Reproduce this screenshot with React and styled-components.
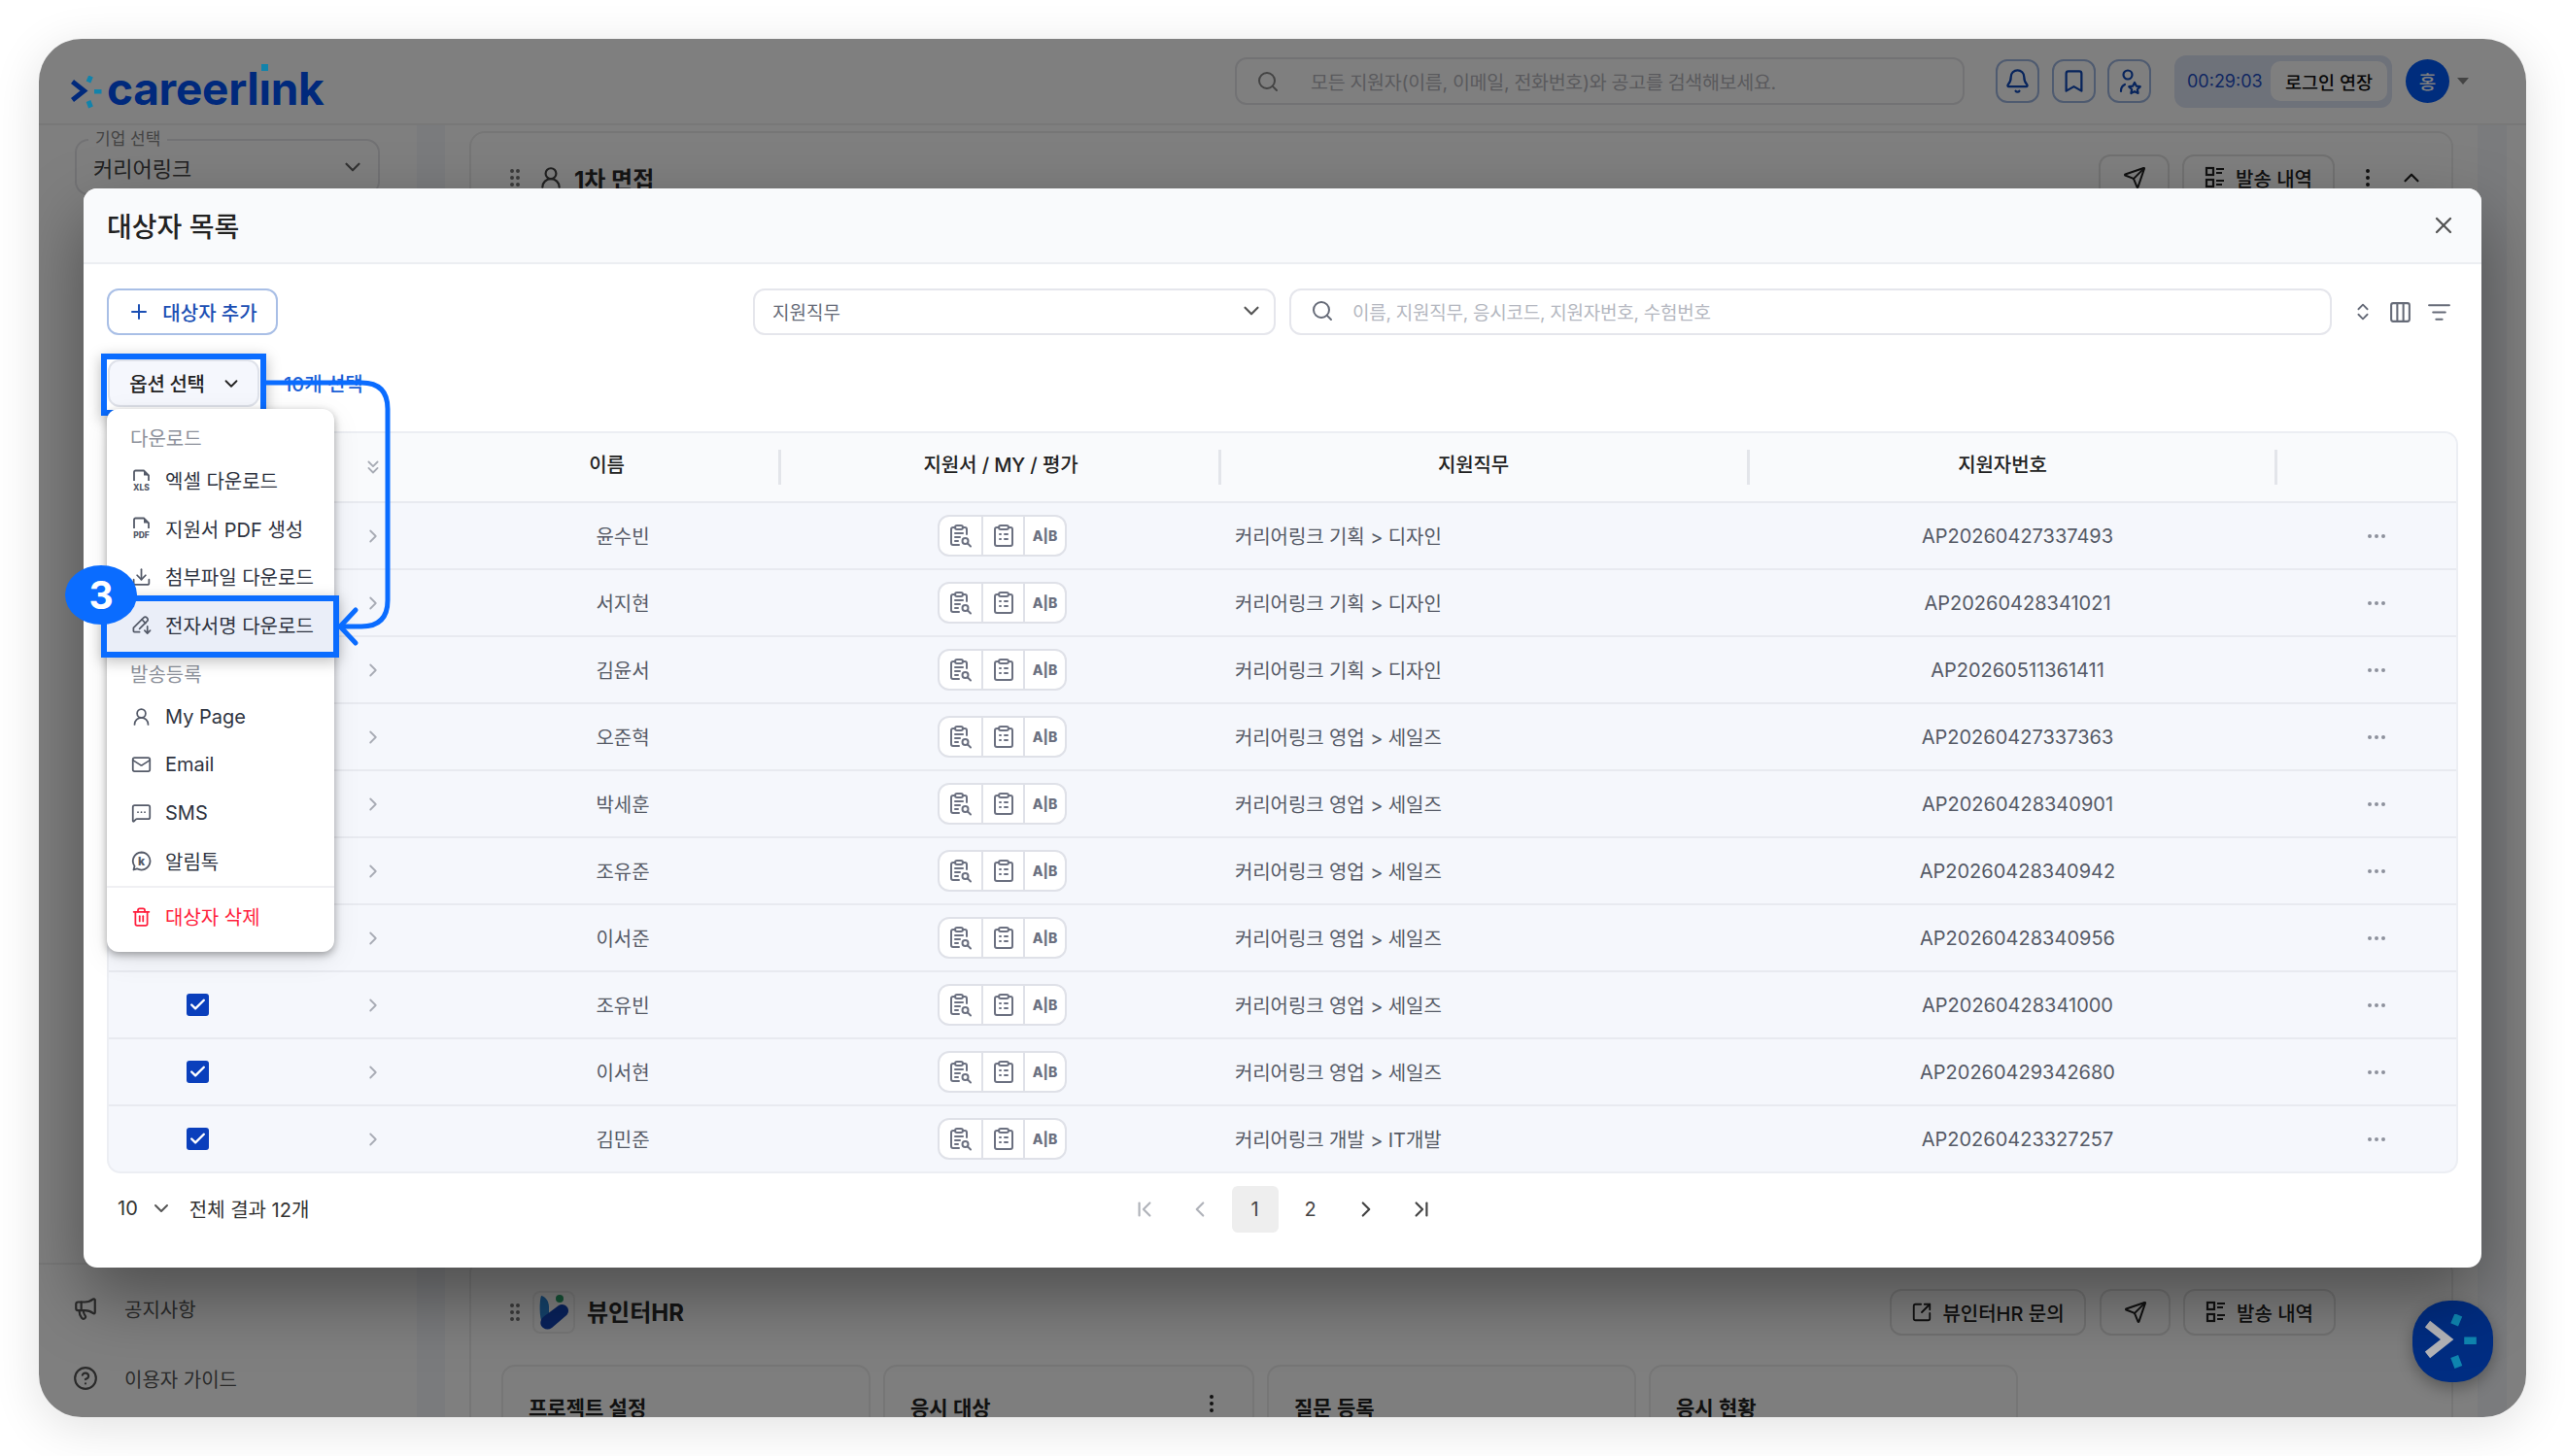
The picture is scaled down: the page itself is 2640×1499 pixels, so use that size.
import React from 'react';
import styled, { createGlobalStyle } from 'styled-components';
import {
  Search, Bell, Bookmark, ChevronDown, ChevronUp, ChevronRight, ChevronLeft, ChevronsDown, ChevronFirst, ChevronLast,
  X, Plus, ChevronsUpDown, Columns3, ListFilter, GripVertical, UserRound, Mail, MessageSquareMore, Trash2, Download,
  Ellipsis, EllipsisVertical, Send, SquareArrowOutUpRight, Megaphone, CircleHelp, Check,
} from 'lucide-react';

const FONT = `Inter, "Noto Sans CJK KR", sans-serif`;
const BLUE = '#0a6cff';

const Global = createGlobalStyle`
  html, body { margin: 0; padding: 0; background: #fff; }
  * { box-sizing: border-box; }
  body { font-family: ${FONT}; }
`;

const Stage = styled.div`
  width: 2640px; height: 1499px; padding: 40px; background: #fff; overflow: hidden;
`;
const Win = styled.div`
  position: relative; width: 2560px; height: 1419px; border-radius: 44px; overflow: hidden; background: #fff;
  box-shadow: 0 10px 50px rgba(0,0,0,.12);
  display: flex; flex-direction: column;
`;
const TopBar = styled.header`
  height: 89px; flex: none; display: flex; align-items: center; padding: 0 59px 0 33px; border-bottom: 2px solid #f1f1f1;
`;
const LogoWrap = styled.div`display: flex; align-items: center; gap: 3px; position: relative; z-index: 1; margin-top: 22px;`;
const LogoText = styled.span`
  font-size: 46px; font-weight: 700; letter-spacing: -.3px; color: #00297c; line-height: 1; margin-top: -8px;
`;
const Dotless = styled.span`
  position: relative;
  &::before { content: ''; position: absolute; left: 3px; top: 3px; width: 7px; height: 7px; background: #1283ab; }
`;
const TopSearch = styled.div`
  margin-left: auto; width: 751px; height: 49px; border: 2px solid #e4e4e8; border-radius: 12px; display: flex; align-items: center;
  padding-left: 20px; gap: 32px; font-size: 19.5px; letter-spacing: -.3px; color: #b4b4ba;
`;
const IconBox = styled.div`
  width: 45px; height: 45px; border: 2px solid #9fb6e0; border-radius: 12px; display: flex; align-items: center; justify-content: center;
  color: #0f48b8; margin-left: ${p => p.$ml}px;
`;
const Timer = styled.div`
  margin-left: 24px; width: 224px; height: 54px; border-radius: 12px; background: #dde4f4; display: flex; align-items: center; justify-content: space-between;
  padding: 0 5px 0 13px; color: #1f4fc4; font-size: 18px; font-weight: 400;
`;
const TimerBtn = styled.div`
  width: 120px; height: 41px; border-radius: 10px; background: #fff; color: #111; font-size: 18.5px; font-weight: 500; display: flex; align-items: center; justify-content: center;
`;
const Avatar = styled.div`
  margin-left: 14px; width: 45px; height: 45px; border-radius: 50%; background: #005afa; color: #fff; font-size: 19px; font-weight: 500;
  display: flex; align-items: center; justify-content: center;
`;
const Caret = styled.div`
  margin-left: 8px; width: 0; height: 0; border-left: 6px solid transparent; border-right: 6px solid transparent; border-top: 7px solid #888;
`;
const Body = styled.div`display: flex; flex: 1; min-height: 0;`;
const Side = styled.aside`
  width: 389px; flex: none; padding: 14px 38px 0 37px; display: flex; flex-direction: column; position: relative;
`;
const CompanySelect = styled.div`
  position: relative; height: 58px; border: 2px solid #e4e4e8; border-radius: 14px; display: flex; align-items: center; justify-content: space-between;
  padding: 0 13px 0 17px; font-size: 22px; color: #444;
`;
const Legend = styled.span`
  position: absolute; left: 12px; top: -13px; background: #fff; padding: 0 7px; font-size: 17px; color: #888; line-height: 22px;
`;
const SideFoot = styled.div`
  margin-top: auto; margin-left: -37px; margin-right: -38px; padding: 0 0 4px 35px; border-top: 2px solid #f1f1f1; display: flex; flex-direction: column;
`;
const SideLink = styled.div`
  height: 72px; display: flex; align-items: center; gap: 27px; font-size: 20px; color: #555; &:first-child { margin-top: 9px; }
`;
const Gutter = styled.div`width: ${p => p.$w}px; flex: none; background: #f4f6fb; margin-right: ${p => p.$mr || 0}px;`;
const Main = styled.main`
  flex: 1; min-width: 0; padding: 6px 25px 0; display: flex; flex-direction: column; gap: 10px; overflow: hidden;
`;
const Card = styled.section`
  flex: none; height: ${p => p.$h}px; border: 2px solid #ececec; border-radius: 16px; padding: ${p => p.$pt}px 0 0 31px;
`;
const CardHead = styled.div`
  display: flex; align-items: center; height: 48px; padding-right: ${p => p.$pr}px; color: #222;
`;
const CardTitle = styled.h3`
  margin: 0; font-size: 24px; font-weight: 700; color: #2a2a2a; margin-left: ${p => p.$ml}px; margin-right: auto; margin-top: ${p => p.$mt || 0}px;
`;
const LogoTile = styled.div`
  width: 44px; height: 44px; border: 2px solid #eee; border-radius: 8px; margin-left: 6px; display: flex; align-items: center; justify-content: center;
`;
const GhostBtn = styled.div`
  height: 48px; width: ${p => p.$w}px; margin-left: ${p => p.$ml}px; border: 2px solid #e2e2e2; border-radius: 12px; display: flex; align-items: center; justify-content: center;
  gap: 10px; font-size: 20px; font-weight: 500; color: #222; white-space: nowrap;
`;
const SubCards = styled.div`display: flex; gap: 13px; margin-top: 30px;`;
const SubCard = styled.div`
  width: ${p => p.$w}px; height: 120px; border: 2px solid #ececec; border-radius: 14px; padding: 26px 30px 0 26px; font-size: 21px; font-weight: 600; color: #222;
  display: flex; justify-content: space-between; background: #fcfdfc;
`;
const Overlay = styled.div`position: absolute; inset: 0; background: rgba(0,0,0,.5);`;
const Fab = styled.div`
  position: absolute; left: 2443px; top: 1299px; width: 83px; height: 84px; border-radius: 38px; background: #002d82; display: flex; align-items: center; justify-content: center;
  box-shadow: 0 6px 16px rgba(0,0,0,.3);
`;

const Modal = styled.div`
  position: absolute; left: 46px; top: 154px; width: 2468px; height: 1111px; background: #fff; border-radius: 14px; display: flex; flex-direction: column;
  box-shadow: 0 30px 70px rgba(0,0,0,.38);
`;
const ModalHead = styled.div`
  height: 78px; flex: none; background: #f9fafc; border-bottom: 2px solid #eceef2; border-radius: 14px 14px 0 0; display: flex; align-items: center; justify-content: space-between; padding: 0 25px 0 24px;
`;
const ModalTitle = styled.h2`margin: 0; font-size: 28px; font-weight: 500; color: #222;`;
const CloseBtn = styled.div`color: #555; display: flex;`;
const ModalBody = styled.div`flex: 1; padding: 25px 24px 0; display: flex; flex-direction: column;`;
const Toolbar = styled.div`display: flex; height: 48px; flex: none;`;
const AddBtn = styled.div`
  width: 176px; height: 48px; border: 2px solid #a9bfe6; border-radius: 12px; color: #1b4fb4; font-size: 20px; font-weight: 500; display: flex; align-items: center; justify-content: center; gap: 12px;
`;
const JobSelect = styled.div`
  margin-left: auto; width: 538px; border: 2px solid #e5e6ec; border-radius: 12px; display: flex; align-items: center; justify-content: space-between; padding: 0 10px 2px 18px; font-size: 19px; color: #666b78;
`;
const SearchBox = styled.div`
  margin-left: 14px; width: 1073px; border: 2px solid #e5e6ec; border-radius: 12px; display: flex; align-items: center; gap: 19px; padding: 0 0 2px 20px; color: #b4b7c0; font-size: 19px; letter-spacing: -.25px;
`;
const ToolIcons = styled.div`
  width: 130px; display: flex; align-items: center; justify-content: flex-end; gap: 15px; padding-right: 7px; color: #666b78;
`;
const OptRow = styled.div`display: flex; align-items: center; height: 49px; margin-top: 25px; flex: none;`;
const OptWrap = styled.div`
  position: relative; margin-left: 1px;
  &::after { content: ''; position: absolute; left: -7px; right: -7px; top: -6px; bottom: -9px; border: 6px solid ${BLUE}; box-shadow: 0 4px 14px rgba(0,0,0,.28); pointer-events: none; }
`;
const OptBtn = styled.div`
  width: 156px; height: 49px; border: 2px solid #dfe2ea; border-radius: 12px; background: #f5f7fd; display: flex; align-items: center; justify-content: center; gap: 16px; font-size: 20px; font-weight: 500; color: #222; letter-spacing: -.3px; padding-left: 4px;
`;
const Selected = styled.span`margin-left: 25px; font-size: 20px; font-weight: 500; color: #1b5fd6;`;
const Table = styled.div`
  margin-top: 25px; height: 764px; flex: none; border: 2px solid #eceef3; border-radius: 14px; overflow: hidden; background: #f5f7fc;
`;
const COLS = '182px 154px 356px 453px 544px 543px 1fr';
const HeadRow = styled.div`
  display: grid; grid-template-columns: ${COLS}; height: 72px; align-items: center; background: #f9fafc; border-bottom: 2px solid #e8eaf0;
`;
const HeadCell = styled.div`
  height: 36px; display: flex; align-items: center; justify-content: center; font-size: 20px; font-weight: 500; color: #222; letter-spacing: -.1px;
  padding: 0 ${p => p.$pr || 0}px 8px ${p => p.$pl || 0}px;
  border-right: ${p => (p.$sep ? '3px solid #e3e5ea' : 'none')};
`;
const Row = styled.div`
  display: grid; grid-template-columns: ${COLS}; height: 69px; align-items: center; border-bottom: 2px solid #e8eaf0; font-size: 20px; color: #555a66;
`;
const CheckCell = styled.div`display: flex; justify-content: center;`;
const Box = styled.div`
  width: 23px; height: 23px; border-radius: 3px; background: #0a3fbc; color: #fff; display: flex; align-items: center; justify-content: center;
`;
const ChevCell = styled.div`display: flex; padding-left: 79px; color: #a8acb5;`;
const CenterCell = styled.div`display: flex; justify-content: center; padding-left: ${p => p.$pl || 0}px;`;
const JobCell = styled.div`padding-left: 14px; letter-spacing: -.1px;`;
const Seg = styled.div`
  display: flex; height: 43px; border: 2px solid #dfe1e8; border-radius: 12px; background: #fff; color: #6b7080;
`;
const SegItem = styled.div`
  width: 43px; display: flex; align-items: center; justify-content: center; font-size: 14px; font-weight: 800;
  & + & { border-left: 2px solid #dfe1e8; }
`;
const Foot = styled.div`
  display: grid; grid-template-columns: 1fr auto 1fr; align-items: center; height: 48px; margin-top: 13px; flex: none;
`;
const FootLeft = styled.div`display: flex; align-items: center; padding: 0 0 2px 11px; font-size: 20px; color: #333; gap: 12px;`;
const FootCount = styled.span`margin-left: 5px;`;
const Pager = styled.div`display: flex; gap: 9px;`;
const PageBtn = styled.div`
  width: 48px; height: 48px; border-radius: 6px; display: flex; align-items: center; justify-content: center; font-size: 20px;
  background: ${p => (p.$on ? '#eeeeee' : 'transparent')}; color: ${p => (p.$dim ? '#b0b3ba' : '#444')};
`;

const Menu = styled.div`
  position: absolute; left: 24px; top: 227px; width: 234px; height: 559px; background: #fff; border-radius: 12px; padding-top: 9px;
  box-shadow: 0 3px 8px rgba(0,0,0,.35), 0 8px 30px rgba(0,0,0,.08); display: flex; flex-direction: column;
`;
const MenuLabel = styled.div`
  height: 40px; display: flex; align-items: center; padding-left: 24px; font-size: 20px; color: #8d919b; margin-top: ${p => p.$mt || 0}px; position: relative;
`;
const MenuItem = styled.div`
  height: 49.5px; display: flex; align-items: center; gap: 14px; padding-left: 25px; font-size: 20px; color: ${p => (p.$danger ? '#ff1f3d' : '#2e3340')}; position: relative; z-index: ${p => (p.$on ? 1 : 'auto')};
  &::before {
    content: ${p => (p.$on ? "''" : 'none')}; position: absolute; left: -6px; right: -5px; top: -6px; bottom: -9px; border: 6px solid ${BLUE}; background: #eaeef8; z-index: -1;
    box-shadow: 0 4px 14px rgba(0,0,0,.25);
  }
`;
const MenuIcon = styled.span`width: 21px; height: 24px; display: flex; align-items: center; justify-content: center; color: ${p => (p.$danger ? '#ff1f3d' : '#545a68')}; flex: none;`;
const MenuDivider = styled.div`height: 2px; background: #f0f0f3; margin: 1px 0 5px;`;
const Badge = styled.div`
  position: absolute; left: -19px; top: 388px; width: 74px; height: 61px; border-radius: 50%; background: ${BLUE}; color: #fff; font-size: 39px; font-weight: 700;
  display: flex; align-items: center; justify-content: center; z-index: 3;
`;
const Connector = styled.svg`position: absolute; left: 188px; top: 186px; z-index: 2; overflow: visible; pointer-events: none;`;

const Mark = ({ size = 34, chev = '#00297c', dash = '#1283ab' }) => (
  <svg width={size} height={size} viewBox="0 0 34 34" fill="none">
    <path d="M1.500 6 L13.500 15.500 L1.500 25" stroke={chev} strokeWidth="5" strokeLinejoin="miter" />
    <path d="M20.500 0.500 L18 6.500 M18 26 L20.500 32.500" stroke={dash} strokeWidth="5" />
    <rect x="24" y="14" width="7.500" height="4.500" fill={dash} />
  </svg>
);
const ClipSearch = () => (
  <svg width="24" height="26" viewBox="0 0 24 26" fill="none" stroke="currentColor" strokeWidth="2" strokeLinecap="round" strokeLinejoin="round">
    <path d="M6 4H4.500A2 2 0 0 0 2 6v14a2 2 0 0 0 2 2h6M14 4h2a2 2 0 0 1 2 2v5" />
    <rect x="6" y="2" width="8" height="4" rx="2" />
    <path d="M6 10h8M6 14h5M6 18h3" />
    <circle cx="16.500" cy="18" r="3" /><path d="M19 20.500l3 3" />
  </svg>
);
const ClipList = () => (
  <svg width="22" height="26" viewBox="0 0 22 26" fill="none" stroke="currentColor" strokeWidth="2" strokeLinecap="round" strokeLinejoin="round">
    <path d="M6 4H4a2 2 0 0 0-2 2v15a2 2 0 0 0 2 2h14a2 2 0 0 0 2-2V6a2 2 0 0 0-2-2h-2" />
    <rect x="6" y="2" width="10" height="4" rx="2" />
    <path d="M7 11h1M12 11h3M7 16h1M12 16h3" />
  </svg>
);
const FileTag = ({ label }) => (
  <svg width="21" height="24" viewBox="0 0 21 24" fill="none">
    <path d="M3 12V3a1.500 1.500 0 0 1 1.500-1.500H13L18 6.500V12" stroke="currentColor" strokeWidth="1.800" strokeLinejoin="round" />
    <path d="M13 1.500V6.500H18" fill="currentColor" />
    <text x="10.500" y="22" textAnchor="middle" fontSize="8.500" fontWeight="800" fontFamily="Inter" fill="currentColor">{label}</text>
  </svg>
);
const PenDown = () => (
  <svg width="22" height="22" viewBox="0 0 22 22" fill="none" stroke="currentColor" strokeWidth="1.800" strokeLinecap="round" strokeLinejoin="round">
    <path d="M9 19H3.500a1 1 0 0 1-1-1v-3.500L13.500 3.500a2.300 2.300 0 0 1 3.300 0l.5.5a2.300 2.300 0 0 1 0 3.300L9 15.500" />
    <path d="M11.500 5.500l4 4M17.500 13v7M14.500 17.500l3 3 3-3" />
  </svg>
);
const Kakao = () => (
  <svg width="21" height="21" viewBox="0 0 21 21" fill="none">
    <path d="M10.500 1.500a9 9 0 1 1-4.500 16.800L2.500 19.500l1-3.800a9 9 0 0 1 7-14.200z" stroke="currentColor" strokeWidth="1.800" strokeLinejoin="round" />
    <text x="10.500" y="14.500" textAnchor="middle" fontSize="12" fontWeight="800" fontFamily="Inter" fill="currentColor">k</text>
  </svg>
);
const PersonStar = () => (
  <svg width="26" height="28" viewBox="0 0 26 28" fill="none" stroke="currentColor" strokeWidth="2.200" strokeLinecap="round" strokeLinejoin="round">
    <circle cx="11" cy="7" r="4.500" /><path d="M4 24v-1a7 7 0 0 1 4-6" />
    <path d="M18 15l1.800 3.600 4 .6-2.900 2.800.7 4-3.600-1.900-3.600 1.900.7-4-2.900-2.800 4-.6z" />
  </svg>
);
const SendList = () => (
  <svg width="22" height="24" viewBox="0 0 22 24" fill="none" stroke="currentColor" strokeWidth="2.200">
    <rect x="2" y="2" width="7" height="7" /><rect x="2" y="14" width="7" height="7" />
    <path d="M12 3h8M12 7h6M12 15h8M12 19h6" />
  </svg>
);
const ViewInter = () => (
  <svg width="34" height="38" viewBox="0 0 34 38" fill="none">
    <path d="M4 2c5 1 8 6 8 12v8L5 30C2 24 2 8 4 2z" fill="#2a86d8" />
    <path d="M6 35c-4-3-3-8 0-11L22 12c3-2 7-1 9 2s1 7-2 9L15 35c-3 2-6 2-9 0z" fill="#1244b8" />
    <circle cx="23" cy="5" r="4" fill="#2ea56e" />
  </svg>
);

const rows = [
  ['윤수빈', '기획 > 디자인', 'AP20260427337493'],
  ['서지현', '기획 > 디자인', 'AP20260428341021'],
  ['김윤서', '기획 > 디자인', 'AP20260511361411'],
  ['오준혁', '영업 > 세일즈', 'AP20260427337363'],
  ['박세훈', '영업 > 세일즈', 'AP20260428340901'],
  ['조유준', '영업 > 세일즈', 'AP20260428340942'],
  ['이서준', '영업 > 세일즈', 'AP20260428340956'],
  ['조유빈', '영업 > 세일즈', 'AP20260428341000'],
  ['이서현', '영업 > 세일즈', 'AP20260429342680'],
  ['김민준', '개발 > IT개발', 'AP20260423327257'],
];

export default function App() {
  return (
    <Stage>
      <Global />
      <Win>
        <TopBar>
          <LogoWrap>
            <Mark />
            <LogoText>careerl<Dotless>ı</Dotless>nk</LogoText>
          </LogoWrap>
          <TopSearch><Search size={24} color="#888" />모든 지원자(이름, 이메일, 전화번호)와 공고를 검색해보세요.</TopSearch>
          <IconBox $ml={32}><Bell size={27} /></IconBox>
          <IconBox $ml={13}><Bookmark size={27} /></IconBox>
          <IconBox $ml={12}><PersonStar /></IconBox>
          <Timer>00:29:03<TimerBtn>로그인 연장</TimerBtn></Timer>
          <Avatar>홍</Avatar>
          <Caret />
        </TopBar>
        <Body>
          <Side>
            <CompanySelect>
              <Legend>기업 선택</Legend>
              커리어링크
              <ChevronDown size={26} color="#666" />
            </CompanySelect>
            <SideFoot>
              <SideLink><Megaphone size={26} />공지사항</SideLink>
              <SideLink><CircleHelp size={26} />이용자 가이드</SideLink>
            </SideFoot>
          </Side>
          <Gutter $w={29} />
          <Main>
            <Card $h={1150} $pt={22}>
              <CardHead $pr={28}>
                <GripVertical size={24} color="#777" style={{ marginLeft: 2 }} />
                <UserRound size={26} color="#444" style={{ marginLeft: 12 }} />
                <CardTitle $ml={11}>1차 면접</CardTitle>
                <GhostBtn $w={73} $ml={0}><Send size={24} /></GhostBtn>
                <GhostBtn $w={157} $ml={13}><SendList />발송 내역</GhostBtn>
                <EllipsisVertical size={24} style={{ marginLeft: 22 }} />
                <ChevronUp size={26} style={{ marginLeft: 20 }} />
              </CardHead>
            </Card>
            <Card $h={200} $pt={30}>
              <CardHead $pr={119}>
                <GripVertical size={24} color="#777" style={{ marginLeft: 2 }} />
                <LogoTile><ViewInter /></LogoTile>
                <CardTitle $ml={12} $mt={-3}>뷰인터HR</CardTitle>
                <GhostBtn $w={202} $ml={0}><SquareArrowOutUpRight size={22} />뷰인터HR 문의</GhostBtn>
                <GhostBtn $w={73} $ml={14}><Send size={24} /></GhostBtn>
                <GhostBtn $w={157} $ml={13}><SendList />발송 내역</GhostBtn>
              </CardHead>
              <SubCards>
                <SubCard $w={380}>프로젝트 설정</SubCard>
                <SubCard $w={382}>응시 대상<EllipsisVertical size={24} /></SubCard>
                <SubCard $w={380}>질문 등록</SubCard>
                <SubCard $w={380}>응시 현황</SubCard>
              </SubCards>
            </Card>
          </Main>
          <Gutter $w={30} $mr={20} />
        </Body>
        <Overlay />
        <Fab><Mark size={57} chev="#b4b4b8" dash="#0f86b0" /></Fab>
        <Modal>
          <ModalHead>
            <ModalTitle>대상자 목록</ModalTitle>
            <CloseBtn><X size={28} /></CloseBtn>
          </ModalHead>
          <ModalBody>
            <Toolbar>
              <AddBtn><Plus size={24} />대상자 추가</AddBtn>
              <JobSelect>지원직무<ChevronDown size={26} color="#555" /></JobSelect>
              <SearchBox><Search size={24} color="#666b78" />이름, 지원직무, 응시코드, 지원자번호, 수험번호</SearchBox>
              <ToolIcons>
                <ChevronsUpDown size={22} />
                <Columns3 size={25} />
                <ListFilter size={25} />
              </ToolIcons>
            </Toolbar>
            <OptRow>
              <OptWrap><OptBtn>옵션 선택<ChevronDown size={22} /></OptBtn></OptWrap>
              <Selected>10개 선택</Selected>
            </OptRow>
            <Table>
              <HeadRow>
                <HeadCell />
                <ChevCell><ChevronsDown size={22} /></ChevCell>
                <HeadCell $sep>이름</HeadCell>
                <HeadCell $sep $pl={2}>지원서 / MY / 평가</HeadCell>
                <HeadCell $sep $pr={22}>지원직무</HeadCell>
                <HeadCell $sep $pr={20}>지원자번호</HeadCell>
                <HeadCell />
              </HeadRow>
              {rows.map(([name, job, no]) => (
                <Row key={no}>
                  <CheckCell><Box><Check size={19} strokeWidth={3} /></Box></CheckCell>
                  <ChevCell><ChevronRight size={22} /></ChevCell>
                  <CenterCell $pl={30}>{name}</CenterCell>
                  <CenterCell $pl={2}>
                    <Seg>
                      <SegItem><ClipSearch /></SegItem>
                      <SegItem><ClipList /></SegItem>
                      <SegItem>A|B</SegItem>
                    </Seg>
                  </CenterCell>
                  <JobCell>커리어링크 {job}</JobCell>
                  <CenterCell $pl={8}>{no}</CenterCell>
                  <CenterCell $pl={20}><Ellipsis size={24} color="#8d919c" /></CenterCell>
                </Row>
              ))}
            </Table>
            <Foot>
              <FootLeft>10<ChevronDown size={24} color="#555" /><FootCount>전체 결과 12개</FootCount></FootLeft>
              <Pager>
                <PageBtn $dim><ChevronFirst size={26} /></PageBtn>
                <PageBtn $dim><ChevronLeft size={26} /></PageBtn>
                <PageBtn $on>1</PageBtn>
                <PageBtn>2</PageBtn>
                <PageBtn><ChevronRight size={26} /></PageBtn>
                <PageBtn><ChevronLast size={26} /></PageBtn>
              </Pager>
              <span />
            </Foot>
          </ModalBody>
          <Menu>
            <MenuLabel>다운로드</MenuLabel>
            <MenuItem><MenuIcon><FileTag label="XLS" /></MenuIcon>엑셀 다운로드</MenuItem>
            <MenuItem><MenuIcon><FileTag label="PDF" /></MenuIcon>지원서 PDF 생성</MenuItem>
            <MenuItem><MenuIcon><Download size={22} /></MenuIcon>첨부파일 다운로드</MenuItem>
            <MenuItem $on><MenuIcon><PenDown /></MenuIcon>전자서명 다운로드</MenuItem>
            <MenuLabel $mt={5}>발송등록</MenuLabel>
            <MenuItem><MenuIcon><UserRound size={22} /></MenuIcon>My Page</MenuItem>
            <MenuItem><MenuIcon><Mail size={22} /></MenuIcon>Email</MenuItem>
            <MenuItem><MenuIcon><MessageSquareMore size={22} /></MenuIcon>SMS</MenuItem>
            <MenuItem><MenuIcon><Kakao /></MenuIcon>알림톡</MenuItem>
            <MenuDivider />
            <MenuItem $danger><MenuIcon $danger><Trash2 size={22} /></MenuIcon>대상자 삭제</MenuItem>
          </Menu>
          <Connector width="220" height="290" viewBox="274 380 220 290" fill="none" stroke={BLUE} strokeWidth="5" strokeLinecap="round" strokeLinejoin="round">
            <path d="M274 394H372Q399 394 399 421V618Q399 645 372 645H353" />
            <path d="M366 628L350 645L366 662" />
          </Connector>
          <Badge>3</Badge>
        </Modal>
      </Win>
    </Stage>
  );
}
